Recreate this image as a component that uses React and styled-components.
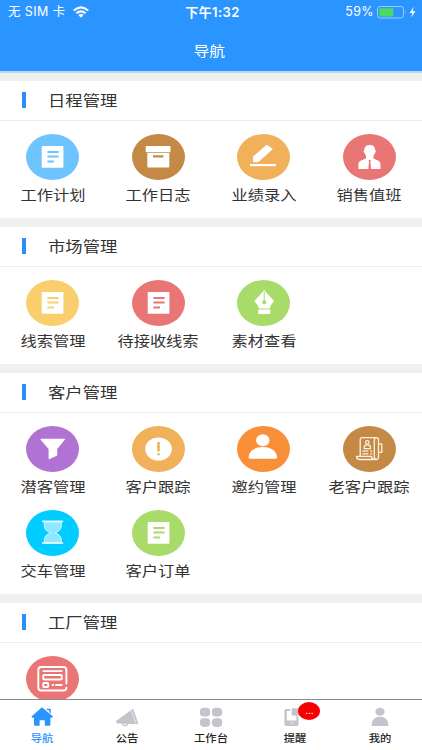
import React from "react";
import styled, { createGlobalStyle } from "styled-components";

const GlobalStyle = createGlobalStyle`
  * {
    box-sizing: border-box;
  }
  body {
    margin: 0;
    overflow: hidden;
    font-family: "Liberation Sans", "Noto Sans CJK SC", sans-serif;
  }
`;

const Page = styled.div`
  display: flex;
  flex-direction: column;
  width: 422px;
  height: 750px;
  overflow: hidden;
  background: #f0f0f1;
`;

const Header = styled.header`
  flex: none;
  height: 73px;
  background: #2b95ff;
  border-bottom: 2px solid #b4d6fb;
  color: #fff;
`;
const StatusBar = styled.div`
  display: grid;
  grid-template-columns: 1fr auto 1fr;
  align-items: center;
  height: 24px;
  padding: 0 5px 0 8px;
`;
const StatusGroup = styled.div`
  display: flex;
  align-items: center;
  justify-content: ${(props) => props.$align || "flex-start"};
`;
const StatusText = styled.span`
  font-family: Inter, "Noto Sans CJK SC", sans-serif;
  font-size: ${(props) => props.$size || 12}px;
  font-weight: ${(props) => props.$weight || 400};
  line-height: 24px;
  letter-spacing: ${(props) => props.$spacing || 0}px;
  white-space: nowrap;
`;
const WifiIcon = styled.svg`
  width: 16px;
  height: 12px;
  margin-left: 7px;
`;
const BatteryIcon = styled.svg`
  width: 40px;
  height: 14px;
  margin-left: 3px;
`;
const Title = styled.h1`
  margin: 0;
  padding: 15px 3px 0 0;
  font-size: 14px;
  font-weight: 400;
  line-height: 24px;
  text-align: center;
  transform: scaleX(1.13);
`;

const Content = styled.main`
  flex: 1;
  min-height: 0;
  overflow: hidden;
  padding-top: 8px;
`;
const Section = styled.section`
  margin-bottom: 9px;
  background: #fff;
`;
const SectionHead = styled.div`
  display: flex;
  align-items: center;
  height: 39.5px;
  padding-left: 22px;
  border-bottom: 1px solid #ececec;
`;
const SectionMark = styled.i`
  width: 4px;
  height: 16px;
  background: #2b8ff5;
`;
const SectionTitle = styled.h2`
  margin: 2px 0 0 22px;
  font-size: 15px;
  font-weight: 400;
  line-height: 24px;
  color: #333;
  transform: scaleX(1.155);
  transform-origin: left;
`;
const Menu = styled.ul`
  display: grid;
  grid-template-columns: repeat(4, 1fr);
  margin: 0;
  padding: 6.5px 0 7px;
  list-style: none;
`;
const MenuItem = styled.li`
  display: flex;
  flex-direction: column;
  align-items: center;
  height: 84px;
  padding-top: 7px;
`;
const Disc = styled.div`
  width: 53px;
  height: 46px;
  border-radius: 50%;
  background: ${(props) => props.$color};
  svg {
    display: block;
    width: 53px;
    height: 46px;
  }
`;
const MenuLabel = styled.span`
  margin-top: 3px;
  font-size: 14px;
  line-height: 24px;
  color: #333;
  white-space: nowrap;
  transform: scaleX(1.16);
`;

const TabBar = styled.nav`
  flex: none;
  display: grid;
  grid-template-columns: repeat(5, 1fr);
  height: 51px;
  border-top: 1px solid #8c8c8c;
  background: #fff;
`;
const Tab = styled.div`
  display: flex;
  flex-direction: column;
  align-items: center;
  padding-top: 7px;
  color: ${(props) => (props.$active ? "#2b95ff" : "#222")};
`;
const TabIcon = styled.div`
  position: relative;
  height: 20px;
  color: ${(props) => (props.$active ? "#2b95ff" : "#c3c5cd")};
  svg {
    display: block;
    width: 24px;
    height: 20px;
  }
`;
const TabLabel = styled.span`
  margin-top: 3px;
  font-size: 10px;
  font-weight: 500;
  line-height: 18px;
  transform: scaleX(1.13);
`;
const Badge = styled.span`
  position: absolute;
  top: -5px;
  left: 15px;
  width: 22px;
  height: 18px;
  border-radius: 50%;
  background: #f80000;
  color: #fff;
  font-size: 10px;
  line-height: 18px;
  text-align: center;
`;

const DiscSvg = ({ children }) => (
  <svg viewBox="0 0 53 46" fill="#fff">
    {children}
  </svg>
);

const DocIcon = () => (
  <DiscSvg>
    <path
      fillRule="evenodd"
      d="M16.3 12h20.5q.6 0 .6.6v20.5q0 .6-.6.6H16.3q-.6 0-.6-.6V12.600q0-.6.6-.6zM21.400 17v2h11.200v-2zM21.400 21.600v2h11.200v-2zM21.400 26.500v2H28v-2z"
    />
  </DiscSvg>
);
const ArchiveIcon = () => (
  <DiscSvg>
    <rect x="13.700" y="12" width="24.800" height="6.200" rx=".8" />
    <path fillRule="evenodd" d="M15.300 19h22v13.500q0 1-1 1h-20q-1 0-1-1zM21 21.300v2.300h10.400v-2.300z" />
  </DiscSvg>
);
const EditIcon = () => (
  <DiscSvg>
    <path d="M16 22.500 29 11.300q.8-.6 1.700 0l5.200 3.600-13.800 12.700-1.500.6H17q-1 0-1-1z" />
    <rect x="13" y="30" width="26" height="2.200" />
  </DiscSvg>
);
const DutyIcon = () => (
  <DiscSvg>
    <path d="M26.700 11c3.600 0 5.400 2 5.400 4.900 1 .3.900 2.500-.1 3-.7 2.600-2.700 4.100-5.300 4.100s-4.400-1.500-5.200-4.100c-1-.5-1.200-2.700-.2-3 0-2.900 1.800-4.900 5.400-4.900z" />
    <path d="M23 21.500h7.500v3l5 2.300q2 1 2 3.500V35H15.400v-4.700q0-2.500 2-3.500l5.600-2.300z" />
    <path fill="#e97574" d="M25.600 26h2.200l-.4 1.800.7 7.200h-2.800l.7-7.200z" />
  </DiscSvg>
);
const NibIcon = () => (
  <DiscSvg>
    <path d="M27.200 9.700c1.800 2.800 5.800 6.400 9.900 11.500-2.300 2.500-3.500 4.300-4.400 7.200H22c-.9-2.900-2.300-4.700-4.600-7.200 4.100-5.100 8-8.700 9.800-11.500z" />
    <rect x="21.300" y="29.400" width="12" height="4.700" rx=".6" />
    <path stroke="#a9db6b" strokeWidth="1" d="M27.200 11v10" />
    <circle cx="27.200" cy="22.300" r="2.100" fill="#a9db6b" />
  </DiscSvg>
);
const FunnelIcon = () => (
  <DiscSvg>
    <path d="M15 12.700h23.300q1 .1.500 1L31.200 23v6.500l-8 3.700q-.6.200-.6-.5V23l-8-9.300q-.5-.9.400-1z" />
  </DiscSvg>
);
const AlertIcon = () => (
  <DiscSvg>
    <ellipse cx="26.500" cy="23" rx="13.300" ry="11.600" />
    <path fill="#f1b15b" d="M25.200 16h2.600v9.600h-2.600zM25.200 27.200h2.600v2h-2.600z" />
  </DiscSvg>
);
const PersonIcon = () => (
  <DiscSvg>
    <ellipse cx="25.800" cy="14.200" rx="6.700" ry="6" />
    <path d="M11.700 31.600c0-6.300 5.500-10.500 14.100-10.500s14.300 4.200 14.300 10.500q0 1.100-1.200 1.100h-26q-1.200 0-1.200-1.100z" />
  </DiscSvg>
);
const CardReaderIcon = () => (
  <DiscSvg>
    <g fill="none" stroke="#fdf1e2" strokeWidth="1.300" strokeLinejoin="round">
      <path d="M33.300 11.700H19.200q-2 0-2 2v16.500M33.300 11.700q-2 0-2 2.300v17q0 2.500 2 2.500t2.200-2.500V14q0-2.300-2.200-2.300z" />
      <path d="M13.600 30.300h14.900q0 3.200 4.300 3.200H16.500q-2.900 0-2.900-3.200z" />
      <path d="M35.500 17.800h3.300v8.500h-3.300" />
      <circle cx="24.300" cy="16.400" r="1.700" />
      <path d="M21.200 22.700v-1.600q0-2.200 3.100-2.200t3.100 2.200v1.600z" />
      <path d="M19.300 25.200h6M27.200 25.200h2M19.300 27.800h6M27.200 27.800h2" />
    </g>
  </DiscSvg>
);
const HourglassIcon = () => (
  <DiscSvg>
    <path
      fill="#8ee8ff"
      stroke="#d6f7ff"
      strokeWidth="1"
      d="M18.300 12v3.500c0 4.500 3.500 6.300 6.500 7.300-3 1-6.500 2.800-6.500 7.400V32.500h17V30.200c0-4.600-3.600-6.400-6.600-7.400 3-1 6.600-2.800 6.600-7.300V12z"
    />
    <path d="M16 10.600h21.200v1.700H16zM16 32.200h21.200v1.700H16z" fill="#d9f8ff" />
  </DiscSvg>
);
const FactoryIcon = () => (
  <DiscSvg>
    <g fill="none" stroke="#fff" strokeWidth="1.900" strokeLinecap="round">
      <path d="M40.400 27.500V14q0-3-3-3H15.300q-3 0-3 3v17.500q0 3 3 3h22.100q3 0 3-2.800" />
      <path d="M17.300 15.100h18.400" />
      <rect x="17.200" y="19" width="18.600" height="4.500" rx="1" />
      <rect x="17.200" y="27" width="5" height="4" rx=".8" />
      <path d="M26.600 29h.6M30 29h5.700" />
    </g>
  </DiscSvg>
);

const TabSvg = ({ children }) => (
  <svg viewBox="0 0 24 20" fill="currentColor">
    {children}
  </svg>
);
const HomeTabIcon = () => (
  <TabSvg>
    <path d="M12 .3 23 9.500l-.8 1.200h-1.800V18q0 .8-.9.800h-4.700v-5.500H9.600v5.500H4.900q-.9 0-.9-.8v-7.300H2.200l-.8-1.200z" />
    <path d="M16.500 1.800h4.300v4.900l-1.400-1.100V3.300h-2.200z" />
  </TabSvg>
);
const HornTabIcon = () => (
  <TabSvg>
    <path d="M17.200 2.200q.9-.7 1.300.4l4.700 13.600q.3 1.100-.8 1.100L3 16.500q-1.500-.1-1.900-1.400-.3-1.200.9-1.900z" />
    <path fill="none" stroke="currentColor" strokeWidth="1.300" d="M7 16.500q.8 2.200 3.100 2.200t2.600-2" />
    <path stroke="#fff" strokeWidth=".6" d="m16.300 3.500 4.600 13" />
  </TabSvg>
);
const GridTabIcon = () => (
  <TabSvg>
    <rect x=".9" y=".8" width="10.300" height="8.700" rx="3.800" />
    <rect x="12.900" y=".8" width="10.300" height="8.700" rx="3.800" />
    <rect x=".9" y="11.200" width="10.300" height="8.700" rx="3.800" />
    <rect x="12.900" y="11.200" width="10.300" height="8.700" rx="3.800" />
  </TabSvg>
);
const PhoneTabIcon = () => (
  <TabSvg>
    <path
      fillRule="evenodd"
      d="M3 1.900h4v2H3.800v9.600h9.600v-4h2.100v7.800q0 1.700-1.700 1.700H3.100q-1.700 0-1.700-1.700V3.600Q1.400 1.900 3 1.900zM7.200 15.700l1.400 1.300 1.400-1.300z"
    />
    <path d="M9.800 1.300h7.500v7.300h-2.800l-1.800 2.200V8.600H9.800q-1.200 0-1.200-1.200V2.500q0-1.200 1.200-1.200z" />
  </TabSvg>
);
const MeTabIcon = () => (
  <TabSvg>
    <ellipse cx="12" cy="4.700" rx="4.600" ry="4" />
    <path d="M3.600 18.300c0-5.400 3.300-8.500 8.400-8.500s8.400 3.100 8.400 8.500q0 .6-.6.600H4.200q-.6 0-.6-.6z" />
  </TabSvg>
);

const sections = [
  {
    title: "日程管理",
    items: [
      { id: "plan", label: "工作计划", color: "#6ec4ff", Icon: DocIcon },
      { id: "log", label: "工作日志", color: "#c48a45", Icon: ArchiveIcon },
      { id: "score", label: "业绩录入", color: "#f1b15b", Icon: EditIcon },
      { id: "duty", label: "销售值班", color: "#e97574", Icon: DutyIcon },
    ],
  },
  {
    title: "市场管理",
    items: [
      { id: "clue", label: "线索管理", color: "#f8cf6c", Icon: DocIcon },
      { id: "receive", label: "待接收线索", color: "#e97574", Icon: DocIcon },
      { id: "material", label: "素材查看", color: "#a9db6b", Icon: NibIcon },
    ],
  },
  {
    title: "客户管理",
    items: [
      { id: "potential", label: "潜客管理", color: "#b173d3", Icon: FunnelIcon },
      { id: "follow", label: "客户跟踪", color: "#f1b15b", Icon: AlertIcon },
      { id: "invite", label: "邀约管理", color: "#f98f38", Icon: PersonIcon },
      { id: "old", label: "老客户跟踪", color: "#c48a45", Icon: CardReaderIcon },
      { id: "deliver", label: "交车管理", color: "#00ccff", Icon: HourglassIcon },
      { id: "order", label: "客户订单", color: "#a9db6b", Icon: DocIcon },
    ],
  },
  {
    title: "工厂管理",
    items: [{ id: "factory", color: "#e97574", Icon: FactoryIcon }],
  },
];

const tabs = [
  { label: "导航", Icon: HomeTabIcon, active: true },
  { label: "公告", Icon: HornTabIcon },
  { label: "工作台", Icon: GridTabIcon },
  { label: "提醒", Icon: PhoneTabIcon, badge: "..." },
  { label: "我的", Icon: MeTabIcon },
];

const App = () => {
  return (
    <Page>
      <GlobalStyle />
      <Header>
        <StatusBar>
          <StatusGroup>
            <StatusText $size={12.5} $spacing={0.4}>
              无 SIM 卡
            </StatusText>
            <WifiIcon viewBox="0 0 16 12" fill="none" stroke="#fff" strokeWidth="2.1">
              <path d="M.8 4.500q7.200-6.400 14.400 0M3.400 7.300q4.600-4 9.200 0" />
              <path fill="#fff" stroke="none" d="M5.300 9.100q2.700-2 5.400 0L8 11.800z" />
            </WifiIcon>
          </StatusGroup>
          <StatusText $size={13} $weight={600} $spacing={0.4}>
            下午1:32
          </StatusText>
          <StatusGroup $align="flex-end">
            <StatusText $size={12.5} $spacing={0.4}>
              59%
            </StatusText>
            <BatteryIcon viewBox="0 0 40 14">
              <rect x=".5" y="1.500" width="26" height="11.500" rx="2.500" fill="none" stroke="#9dcbf8" />
              <rect x="2.300" y="3.200" width="14" height="8.200" rx="1" fill="#4cd964" />
              <path d="M28 5.300q1.500 2 0 4z" fill="#9dcbf8" />
              <path d="M36.700 1.800 32.500 7.900h2.800l-1.200 4.700 4.400-6.300h-2.900z" fill="#fff" />
            </BatteryIcon>
          </StatusGroup>
        </StatusBar>
        <Title>导航</Title>
      </Header>
      <Content>
        {sections.map((section) => (
          <Section key={section.title}>
            <SectionHead>
              <SectionMark />
              <SectionTitle>{section.title}</SectionTitle>
            </SectionHead>
            <Menu>
              {section.items.map(({ id, label, color, Icon }) => (
                <MenuItem key={id}>
                  <Disc $color={color}>
                    <Icon />
                  </Disc>
                  {label && <MenuLabel>{label}</MenuLabel>}
                </MenuItem>
              ))}
            </Menu>
          </Section>
        ))}
      </Content>
      <TabBar>
        {tabs.map(({ label, Icon, active, badge }) => (
          <Tab key={label} $active={active}>
            <TabIcon $active={active}>
              <Icon />
              {badge && <Badge>{badge}</Badge>}
            </TabIcon>
            <TabLabel>{label}</TabLabel>
          </Tab>
        ))}
      </TabBar>
    </Page>
  );
};

export default App;
